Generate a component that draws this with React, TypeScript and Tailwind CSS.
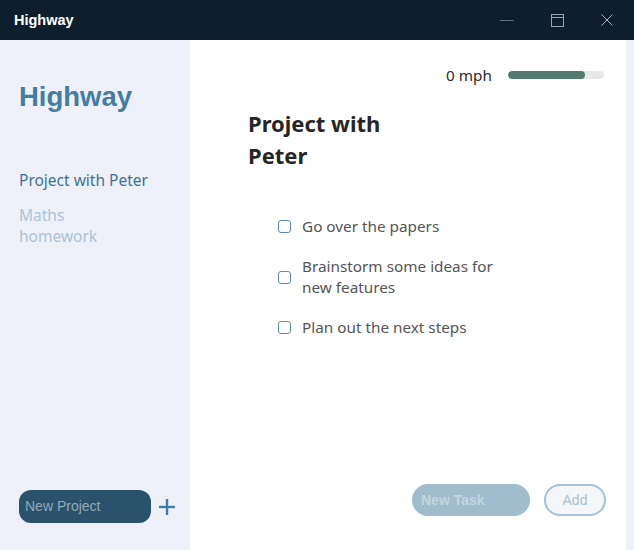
import React from "react";

export default function App() {
  const tasks = [
    "Go over the papers",
    "Brainstorm some ideas for new features",
    "Plan out the next steps",
  ];
  return (
    <div className="w-[634px] h-[550px] flex flex-col overflow-hidden" style={{ fontFamily: '"Noto Sans", "Open Sans", sans-serif' }}>
      <div className="h-[40px] bg-[#0f1e2d] flex items-center shrink-0">
        <span className="ml-[14px] mt-[2px] text-white text-[14.5px] font-bold" style={{ fontFamily: '"Liberation Sans", Arial, sans-serif' }}>Highway</span>
        <div className="ml-auto flex items-center h-full">
          <div className="w-[50px] h-full flex items-center justify-center">
            <svg width="14" height="14" viewBox="0 0 14 14"><line x1="0" y1="7.5" x2="14" y2="7.5" stroke="#5f6f7d" strokeWidth="1" /></svg>
          </div>
          <div className="w-[50px] h-full flex items-center justify-center">
            <svg width="13" height="13" viewBox="0 0 13 13" fill="none" stroke="#9aa4ad" strokeWidth="1"><rect x="0.5" y="0.5" width="12" height="12" /><line x1="0.5" y1="3.5" x2="12.5" y2="3.5" /></svg>
          </div>
          <div className="w-[50px] h-full flex items-center justify-center mr-[2px]">
            <svg width="12" height="12" viewBox="0 0 12 12" stroke="#aab2ba" strokeWidth="1"><line x1="0.5" y1="0.5" x2="11.5" y2="11.5" /><line x1="11.5" y1="0.5" x2="0.5" y2="11.5" /></svg>
          </div>
        </div>
      </div>
      <div className="flex flex-1 min-h-0">
        <div className="w-[190px] bg-[#eef1fa] flex flex-col pl-[19px] pt-[40px] pb-[27px]">
          <div className="text-[27.5px] font-bold text-[#457ca2] leading-[34px]" style={{ fontFamily: '"Liberation Sans", Arial, sans-serif' }}>Highway</div>
          <div className="mt-[55px] text-[15.5px] text-[#3f7198] leading-[22px]">Project with Peter</div>
          <div className="mt-[14px] text-[15.5px] text-[#abc3d8] leading-[21px] w-[90px]">Maths homework</div>
          <div className="mt-auto flex items-center">
            <div className="w-[132px] h-[33px] rounded-[12px] bg-[#2a526c] flex items-center pl-[6px] text-[14px] text-[#91a9b8]" style={{ fontFamily: '"Liberation Sans", Arial, sans-serif' }}>New Project</div>
            <svg className="ml-[8px]" width="16" height="16" viewBox="0 0 16 16" stroke="#3f7ea6" strokeWidth="2.4"><line x1="8" y1="0" x2="8" y2="16" /><line x1="0" y1="8" x2="16" y2="8" /></svg>
          </div>
        </div>
        <div className="w-[436px] bg-white flex flex-col relative">
          <div className="flex items-center justify-end pt-[25px] pr-[22px]">
            <span className="text-[15.3px] text-[#2a2a2a] leading-[20px]">0 mph</span>
            <div className="ml-[16px] w-[96px] h-[8px] rounded-full bg-[#e8e8e8] overflow-hidden">
              <div className="h-full rounded-full bg-[#527a6e]" style={{ width: "80%" }} />
            </div>
          </div>
          <div className="ml-[58px] mt-[22px] text-[22px] font-bold text-[#262626] leading-[32px] w-[160px]">Project with Peter</div>
          <div className="ml-[88px] mt-[45px] flex flex-col gap-[19px]">
            {tasks.map((t) => (
              <div key={t} className="flex items-center">
                <div className="w-[13px] h-[13px] rounded-[3px] border border-[#5a8ab0] shrink-0" />
                <span className="ml-[11px] text-[15.3px] text-[#555555] leading-[21px] w-[210px]">{t}</span>
              </div>
            ))}
          </div>
          <div className="mt-auto mb-[34px] flex items-center justify-end pr-[20px]">
            <div className="w-[118px] h-[32px] rounded-full bg-[#a0bccd] flex items-center pl-[9px] text-[14px] font-bold text-[#c3d5e0]" style={{ fontFamily: '"Liberation Sans", Arial, sans-serif' }}>New Task</div>
            <div className="ml-[14px] w-[62px] h-[32px] rounded-full border-2 border-[#a6c2d4] bg-[#f5f6f7] flex items-center justify-center text-[14px] text-[#a6c2d4]" style={{ fontFamily: '"Liberation Sans", Arial, sans-serif' }}>Add</div>
          </div>
        </div>
        <div className="flex-1 bg-[#eef1fa]" />
      </div>
    </div>
  );
}
